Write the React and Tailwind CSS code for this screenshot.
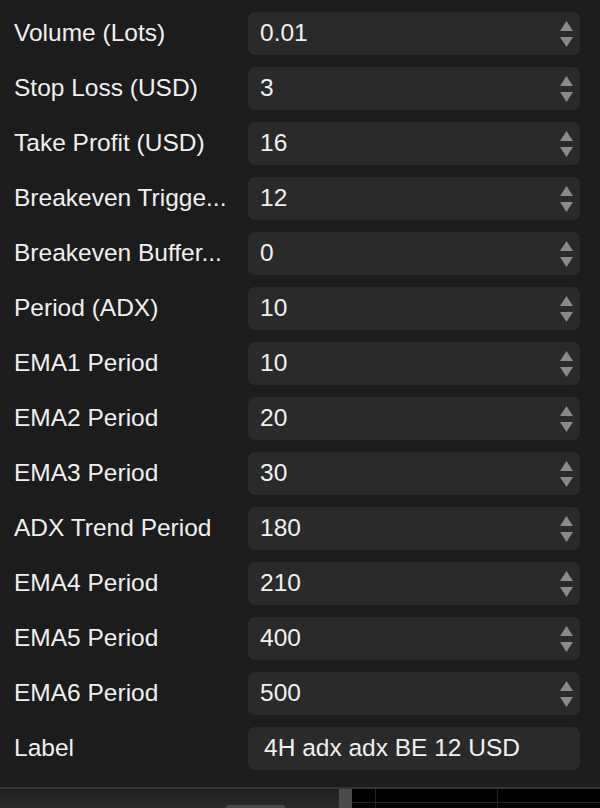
import React from "react";

const params = [
  { label: "Volume (Lots)", value: "0.01" },
  { label: "Stop Loss (USD)", value: "3" },
  { label: "Take Profit (USD)", value: "16" },
  { label: "Breakeven Trigge...", value: "12" },
  { label: "Breakeven Buffer...", value: "0" },
  { label: "Period (ADX)", value: "10" },
  { label: "EMA1 Period", value: "10" },
  { label: "EMA2 Period", value: "20" },
  { label: "EMA3 Period", value: "30" },
  { label: "ADX Trend Period", value: "180" },
  { label: "EMA4 Period", value: "210" },
  { label: "EMA5 Period", value: "400" },
  { label: "EMA6 Period", value: "500" },
];

function Spinner() {
  return (
    <div className="flex flex-col items-center gap-[6px] pr-[7px]">
      <svg width="13" height="10" viewBox="0 0 13 10">
        <path d="M6.5 0 L13 10 L0 10 Z" fill="#8a8a8a" />
      </svg>
      <svg width="13" height="10" viewBox="0 0 13 10">
        <path d="M0 0 L13 0 L6.5 10 Z" fill="#8a8a8a" />
      </svg>
    </div>
  );
}

function Row({ label, value, spin = true }) {
  return (
    <div className="flex h-[43px] items-center">
      <div className="w-[236px] shrink-0 whitespace-nowrap pl-[14px] text-[24.5px] text-[#f0f0f0]">{label}</div>
      <div className="ml-[12px] flex h-full w-[332px] shrink-0 items-center justify-between rounded-[7px] bg-[#2a2a2a]">
        <span className={`${spin ? "pl-[12px]" : "pl-[16px]"} text-[24.5px] text-[#f0f0f0]`}>{value}</span>
        {spin && <Spinner />}
      </div>
    </div>
  );
}

export default function App() {
  return (
    <div
      className="flex h-[808px] w-[600px] flex-col overflow-hidden bg-[#1c1c1c]"
      style={{ fontFamily: '"Liberation Sans", Arial, sans-serif' }}
    >
      <div className="flex flex-col gap-[12px] pt-[12px]">
        {params.map((p) => (
          <Row key={p.label} label={p.label} value={p.value} />
        ))}
        <Row label="Label" value="4H adx adx BE 12 USD" spin={false} />
      </div>

      {/* bottom strip */}
      <div className="mt-[17px] h-[2px] w-full bg-[#353535]" />
      <div className="flex flex-1">
        <div className="relative w-[339px] bg-gradient-to-b from-[#1f1f1f] to-[#2b2b2b]">
          <div className="absolute bottom-0 left-[226px] h-[3px] w-[59px] rounded-t-sm bg-[#4a4a4a]" />
        </div>
        <div className="w-[13px] bg-[#4b4b4b]" />
        <div className="flex flex-1 flex-col bg-black">
          <div className="flex h-[13px]">
            <div className="w-[24px] border-r border-[#1d2230]" />
            <div className="w-[122px] border-r border-[#1d2230]" />
          </div>
          <div className="h-[1px] bg-[#1d2230]" />
          <div className="flex flex-1">
            <div className="w-[24px] border-r border-[#1d2230]" />
            <div className="w-[122px] border-r border-[#1d2230]" />
          </div>
        </div>
      </div>
    </div>
  );
}
